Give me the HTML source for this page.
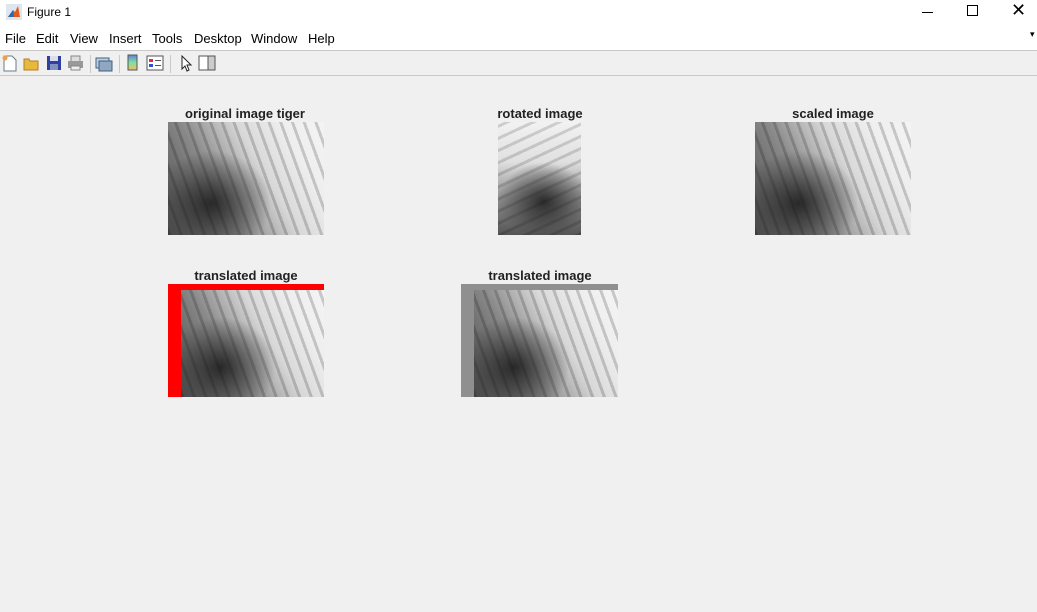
<!DOCTYPE html>
<html><head><style>
*{margin:0;padding:0;box-sizing:border-box}
body{width:1037px;height:612px;background:#f0f0f0;font-family:"Liberation Sans",sans-serif;position:relative;overflow:hidden}
.a{position:absolute}
.title{top:0;left:0;width:1037px;height:27px;background:#fff}
.menu{top:27px;left:0;width:1037px;height:23px;background:#fff;font-size:13px;color:#000}
.menu span{position:absolute;top:4px}
.tb{top:50px;left:0;width:1037px;height:26px;background:#f0f0f0;border-top:1px solid #c8c8c8;border-bottom:1px solid #c8c8c8}
.t{font-weight:bold;font-size:13px;color:#222;text-align:center;width:200px}
.tiger{background:
 radial-gradient(ellipse 45% 55% at 28% 72%, rgba(20,20,20,.8), rgba(60,60,60,.35) 60%, rgba(0,0,0,0) 85%),
 repeating-linear-gradient(70deg, rgba(0,0,0,.18) 0 3px, rgba(255,255,255,0) 3px 11px),
 linear-gradient(60deg,#4a4a4a 0%,#8a8a8a 35%,#d8d8d8 60%,#eeeeee 80%,#f4f4f4 100%);}
.tigerR{background:
 radial-gradient(ellipse 65% 40% at 55% 70%, rgba(20,20,20,.8), rgba(60,60,60,.35) 60%, rgba(0,0,0,0) 85%),
 repeating-linear-gradient(-25deg, rgba(0,0,0,.15) 0 3px, rgba(255,255,255,0) 3px 11px),
 linear-gradient(180deg,#f2f2f2 0%,#e0e0e0 35%,#8a8a8a 70%,#555 100%);}
.sep{position:absolute;top:4px;width:1px;height:18px;background:#c8c8c8}
</style></head><body>
<div class="a title">
 <svg class="a" style="left:6px;top:4px" width="16" height="16"><rect width="16" height="16" fill="#dfe6ee"/><path d="M2 13 L7 6 L9 8 L12 2 L14 13 Z" fill="#e05a1a"/><path d="M2 13 L7 6 L8 13Z" fill="#2a6ab0"/></svg>
 <span class="a" style="left:27px;top:5px;font-size:12px">Figure 1</span>
 <div class="a" style="left:922px;top:12px;width:11px;height:1px;background:#000"></div>
 <div class="a" style="left:967px;top:5px;width:11px;height:11px;border:1px solid #000"></div>
 <span class="a" style="left:1011px;top:0px;font-size:18px;font-weight:300">✕</span>
</div>
<div class="a menu">
 <span style="left:5px">File</span><span style="left:36px">Edit</span><span style="left:70px">View</span><span style="left:109px">Insert</span><span style="left:152px">Tools</span><span style="left:194px">Desktop</span><span style="left:251px">Window</span><span style="left:308px">Help</span>
 <span style="left:1030px;top:2px;font-size:9px">▾</span>
</div>
<div class="a tb">
 <svg class="a" style="left:2px;top:4px" width="16" height="17"><path d="M2 1h8l4 4v11H2z" fill="#fff" stroke="#6a7a8a"/><circle cx="3" cy="3" r="2.5" fill="#f0a040"/></svg>
 <svg class="a" style="left:23px;top:5px" width="17" height="15"><path d="M1 3h5l1 2h8v9H1z" fill="#e8b840" stroke="#b08020"/></svg>
 <svg class="a" style="left:46px;top:4px" width="16" height="16"><rect x="1" y="1" width="14" height="14" fill="#3040a0"/><rect x="4" y="1" width="8" height="5" fill="#dde"/><rect x="4" y="9" width="8" height="6" fill="#8090c0"/></svg>
 <svg class="a" style="left:67px;top:4px" width="17" height="16"><rect x="4" y="1" width="9" height="6" fill="#ddd" stroke="#888"/><rect x="1" y="6" width="15" height="7" fill="#999"/><rect x="4" y="11" width="9" height="4" fill="#eee" stroke="#888"/></svg>
 <div class="sep" style="left:90px"></div>
 <svg class="a" style="left:95px;top:4px" width="18" height="17"><rect x="1" y="3" width="13" height="10" fill="#c0d0e0" stroke="#406080"/><rect x="4" y="6" width="13" height="10" fill="#8fa8c0" stroke="#406080"/></svg>
 <div class="sep" style="left:119px"></div>
 <svg class="a" style="left:127px;top:3px" width="12" height="18"><defs><linearGradient id="g" x1="0" y1="0" x2="0" y2="1"><stop offset="0" stop-color="#6080e0"/><stop offset=".5" stop-color="#80e0a0"/><stop offset="1" stop-color="#f0c060"/></linearGradient></defs><rect x="1" y="1" width="9" height="15" fill="url(#g)" stroke="#555"/></svg>
 <svg class="a" style="left:146px;top:4px" width="18" height="16"><rect x="1" y="1" width="16" height="14" fill="#fff" stroke="#555"/><rect x="3" y="4" width="4" height="3" fill="#e03030"/><rect x="3" y="9" width="4" height="3" fill="#3050d0"/><rect x="9" y="5" width="6" height="1" fill="#555"/><rect x="9" y="10" width="6" height="1" fill="#555"/></svg>
 <div class="sep" style="left:170px"></div>
 <svg class="a" style="left:180px;top:4px" width="12" height="17"><path d="M2 1 L2 14 L5 11 L7 16 L9 15 L7 10 L11 10 Z" fill="#fff" stroke="#222"/></svg>
 <svg class="a" style="left:198px;top:4px" width="18" height="16"><rect x="1" y="1" width="16" height="14" fill="#fff" stroke="#555"/><rect x="10" y="1" width="7" height="14" fill="#ccc" stroke="#555"/></svg>
</div>

<div class="a t" style="left:145px;top:106px">original image tiger</div>
<div class="a tiger" style="left:168px;top:122px;width:156px;height:113px"></div>

<div class="a t" style="left:440px;top:106px">rotated image</div>
<div class="a tigerR" style="left:498px;top:122px;width:83px;height:113px"></div>

<div class="a t" style="left:733px;top:106px">scaled image</div>
<div class="a tiger" style="left:755px;top:122px;width:156px;height:113px"></div>

<div class="a t" style="left:146px;top:268px">translated image</div>
<div class="a" style="left:168px;top:284px;width:156px;height:113px;background:#ff0000"></div>
<div class="a tiger" style="left:181px;top:290px;width:143px;height:107px"></div>

<div class="a t" style="left:440px;top:268px">translated image</div>
<div class="a" style="left:461px;top:284px;width:157px;height:113px;background:#8f8f8f"></div>
<div class="a tiger" style="left:474px;top:290px;width:144px;height:107px"></div>
</body></html>
